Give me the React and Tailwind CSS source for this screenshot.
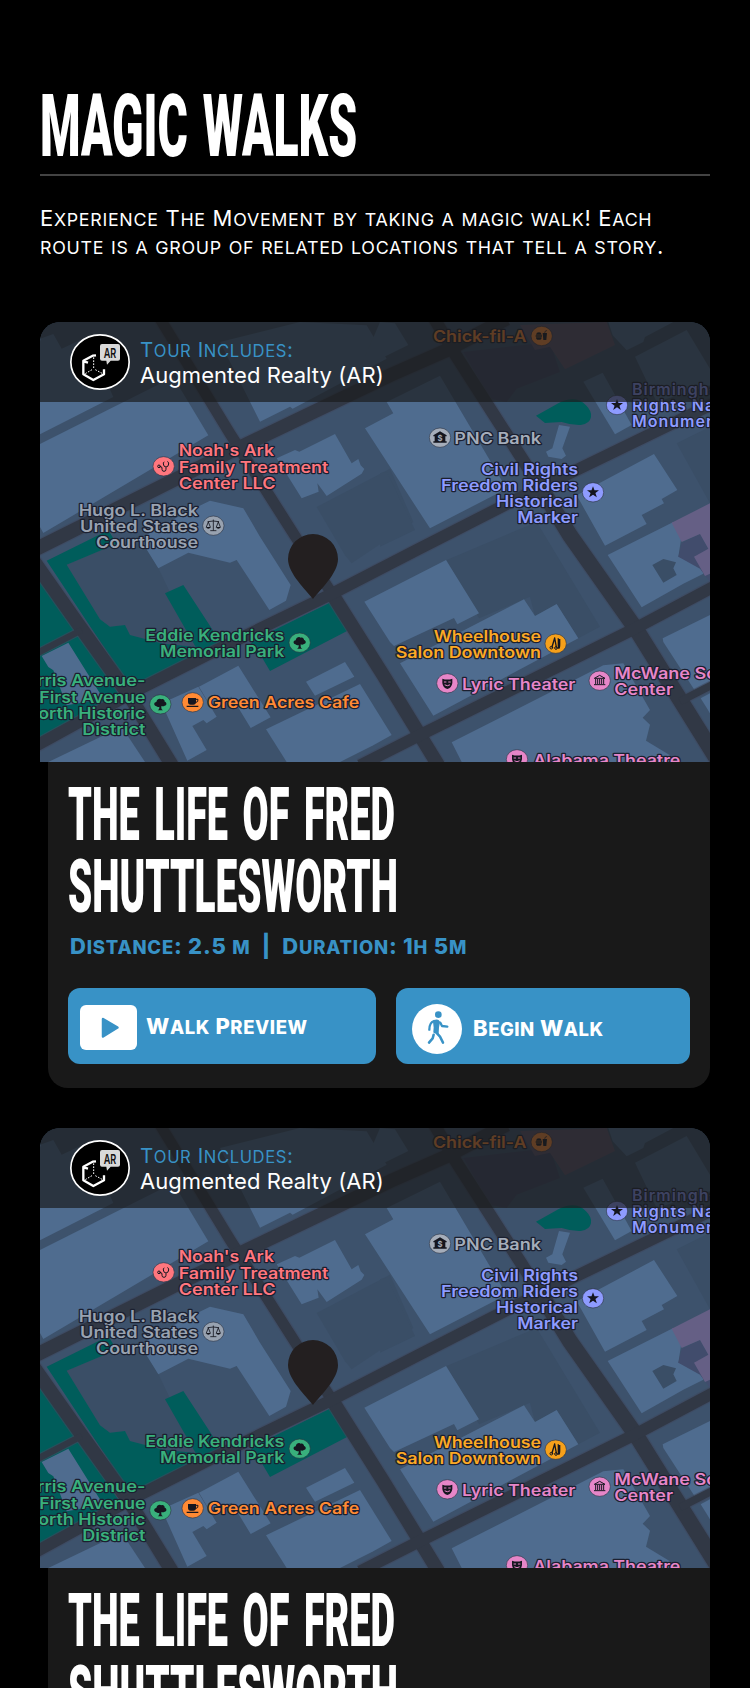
const GROUND = '#3d526c';
const B = '#4f6c8f';
const D = '#3a4e66';
const G = '#005d5b';

const shapes = [
  [D, '80,728 230,665 300,650 355,739 470,975 370,965 270,939 255,909 210,914 180,892'],
  [D, '830,555 1050,440 1120,600 935,724 915,700'],
  [D, '1020,454 1040,449 1125,624 1020,674'],
  [D, '1220,714 1490,600 1680,914 1615,949 1550,846 1485,882 1470,824 1317,889'],
  [D, '1910,364 2010,314 2010,544'],
  [B, '0,50 40,36 65,80 140,45 220,225 0,337'],
  [B, '0,366 400,165 505,340 10,633 0,615'],
  [B, '540,60 660,299 750,254 758,260 1040,110 980,10 780,0'],
  [B, '710,409 765,384 778,389 885,336 935,424 955,411 962,430 973,441 965,455 860,522 832,484 836,509 785,529'],
  [B, '1040,240 1060,274 975,319 1170,619 1400,500 1200,161'],
  [B, '300,650 430,575 510,536 610,559 660,644 752,789 738,836 688,864 590,714 570,722 445,692 355,739'],
  [B, '1080,1024 1452,832 1485,882 1550,846 1615,949 1180,1181'],
  [B, '973,839 1218,714 1317,874 1252,907 1242,888 1062,972 1050,960'],
  [B, '1610,520 1842,396 1912,504 1865,531 1872,544 1805,579 1820,606 1695,671'],
  [B, '1703,699 1900,600 1925,640 1915,704 1985,720 1990,755 1930,785 1805,856'],
  [D, '1837,729 1870,711 1908,721 1900,739 1910,759 1870,782'],
  [B, '1868,949 2010,879 2010,1085 1965,1106 1870,960'],
  [B, '1982,1129 2010,1114 2010,1174'],
  [B, '1785,104 1940,24 2010,140 2010,190 1850,240'],
  [B, '1630,179 1688,152 1775,309 1725,337'],
  [B, '1705,0 1718,40 1760,85 1810,60 1815,45 1900,0'],
  [B, '1020,0 1065,4 1105,69 960,140'],
  ['#3e4563', '1270,90 1530,60 1560,150 1430,200 1400,240 1350,230'],
  ['#5d5069', '1440,9 1700,0 1725,69 1575,142 1530,74 1485,84'],
  ['#414c6c', '1925,664 1980,636 2010,690 2010,780 1980,740 1915,704'],
  ['#655f85', '1895,602 2010,544 2010,755 1995,762 1962,704 2005,680 1980,636 1925,660'],
  [B, '1557,309 1590,314 1567,379 1578,401 1565,411 1525,404 1518,389 1537,379'],
  [G, '0,739 115,921 0,981'],
  [G, '0,994 125,934 235,1114 0,1249'],
  [G, '20,716 205,625 230,665 80,728 180,892 210,914 255,909 270,939 370,965 467,975 375,814 430,789 545,965 590,952 280,1109'],
  [G, '875,839 927,924 690,1047 665,1005 620,985 640,955'],
  [B, '5,1002 85,962 190,1130 80,1150 40,1045 25,1035'],
  [B, '365,1144 475,1094 530,1184 500,1204 490,1194 457,1212 500,1284 442,1316'],
  [B, '477,1094 595,1031 692,1186 632,1218 575,1124 510,1150'],
  [B, '798,1079 915,1020 943,1064 825,1121'],
  [B, '678,1222 960,1086 1055,1239 1000,1270 900,1320 740,1320'],
  [B, '25,1320 245,1214 315,1320'],
  [B, '1235,1261 1690,1030 1750,1024 1830,1164 1808,1187 1830,1208 1818,1256 1890,1300 1890,1320 1265,1320'],
];

const roads = [
  [36, '360,-10 570,335 770,650 880,822'],
  [44, '880,822 1030,1060 1195,1330'],
  [40, '1180,-15 1250,104 1500,494'],
  [50, '1500,494 1590,640 1790,924 2030,1310'],
  [44, '-20,715 120,914 270,1124 396,1330'],
  [44, '-20,685 570,390 1050,160 1220,85 1400,-10'],
  [38, '-20,1276 300,1100 590,954 870,818 1130,684 1420,536 2030,240'],
  [38, '960,1330 1140,1239 1780,922 2030,789'],
  [26, '1920,1138 2030,1082'],
  [22, '-10,994 125,924'],
];

const labels = [
  { x: 1179, y: 59, lines: ['Chick-fil-A'], w: [280], c: '#ff8a34', icon: 'food', ix: 1505, iy: 42 },
  { x: 1776, y: 219, ls: 3, lines: ['Birmingham Civil', 'Rights National', 'Monument'], c: '#8e9bff', icon: 'star', ix: 1731, iy: 249 },
  { x: 1243, y: 365, lines: ['PNC Bank'], w: [260], c: '#a5adba', icon: 'bank', ix: 1200, iy: 347 },
  { x: 1614, y: 458, end: true, lines: ['Civil Rights', 'Freedom Riders', 'Historical', 'Marker'], w: [291, 411, 246, 182], c: '#8e9bff', icon: 'star', ix: 1659, iy: 511 },
  { x: 416, y: 403, lines: ["Noah's Ark", 'Family Treatment', 'Center LLC'], w: [286, 449, 291], c: '#ff767e', icon: 'steth', ix: 371, iy: 433 },
  { x: 474, y: 581, end: true, lines: ['Hugo L. Black', 'United States', 'Courthouse'], w: [358, 354, 306], c: '#98a2b0', icon: 'scale', ix: 520, iy: 611 },
  { x: 733, y: 957, end: true, lines: ['Eddie Kendricks', 'Memorial Park'], w: [417, 373], c: '#39b07c', icon: 'tree', ix: 779, iy: 962 },
  { x: 316, y: 1093, end: true, lines: ['Morris Avenue-', 'First Avenue', 'North Historic', 'District'], w: [408, 318, 362, 189], c: '#39b07c', icon: 'tree', ix: 361, iy: 1147 },
  { x: 503, y: 1159, lines: ['Green Acres Cafe'], w: [455], c: '#ff8a34', icon: 'cup', ix: 458, iy: 1141 },
  { x: 1503, y: 959, end: true, lines: ['Wheelhouse', 'Salon Downtown'], w: [322, 436], c: '#fba925', icon: 'salon', ix: 1547, iy: 965, bg: '#f6a01a' },
  { x: 1266, y: 1103, lines: ['Lyric Theater'], w: [340], c: '#e686c8', icon: 'mask', ix: 1222, iy: 1084 },
  { x: 1723, y: 1071, lines: ['McWane Science', 'Center'], w: [450, 176], c: '#e686c8', icon: 'museum', ix: 1679, iy: 1076 },
  { x: 1480, y: 1331, lines: ['Alabama Theatre'], w: [441], c: '#e686c8', icon: 'mask', ix: 1431, iy: 1312 },
];

const K = '#15161f';

function Glyph({ name, bg }) {
  const line = { fill: 'none', stroke: K, strokeWidth: 3, strokeLinecap: 'round', strokeLinejoin: 'round' };
  switch (name) {
    case 'star':
      return <path fill={K} d="M0-18 4.500-6H18L7.300 2 11.500 15 0 7-11.500 15-7.300 2-18-6H-4.500Z" />;
    case 'tree':
      return (
        <path fill={K} d="M-13 5C-21 3-19-7-12-7-10-16-2-19 3-15 9-18 14-11 13-8 21-6 19 4 13 4 9 7 5 6 3 5L3 12Q4 16 8 18H-8Q-4 16-3 12L-3 7Q-8 9-13 5Z" />
      );
    case 'cup':
      return (
        <g>
          <path fill={K} d="M-14-13H10V-2Q10 7 2 7H-6Q-14 7-14-2ZM-18 10H17V14H-18Z" />
          <path {...line} d="M10-9H16Q18-1 9 1" />
        </g>
      );
    case 'food':
      return (
        <g fill={K}>
          <path d="M-17-4Q-16-11-8-11-1-11 0-4ZM-18-2H1V2H-18ZM-17 4H0Q0 11-4 11H-13Q-17 11-17 4ZM3-9H16L14 12H5Z" />
          <path {...line} strokeWidth="2" d="M9-9 11-15 15-16" />
        </g>
      );
    case 'bank':
      return (
        <g>
          <path fill={K} d="M-20-7 0-19 20-7V-4H16V11H20V15H-20V11H-16V-4H-20Z" />
          <text x="0" y="9" textAnchor="middle" fontSize="23" fontWeight="700" fill={bg}>$</text>
        </g>
      );
    case 'steth':
      return (
        <g>
          <circle cx="-14" cy="0" r="4" {...line} />
          <path {...line} d="M-10 1Q-5 0-5 5V9Q-5 15 1 15 7 15 7 9V4M1-13Q-2-13-1-7 0 2 7 2 14 2 15-7 16-13 12-14" />
        </g>
      );
    case 'scale':
      return (
        <g>
          <path {...line} strokeWidth="2.500" d="M0-17V14M-8 15H8M-16-12 0-14 16-12M-15-11-21 4M-15-11-9 4M15-11 9 4M15-11 21 4" />
          <path fill={K} d="M-22 4H-8Q-10 9-15 9-20 9-22 4ZM8 4H22Q20 9 15 9 10 9 8 4Z" />
        </g>
      );
    case 'salon':
      return (
        <g>
          <path {...line} strokeWidth="4" d="M-3-17-11 10M-3-17 2 10" />
          <circle cx="-13" cy="12" r="4" {...line} />
          <circle cx="1" cy="13" r="4" {...line} />
          <path fill={K} d="M6-17H9V-14H14V2Q14 16 10 16 6 16 6 6Z" />
        </g>
      );
    case 'mask':
      return (
        <g>
          <path fill={K} d="M-15-14Q0-9 15-14V-1Q13 14 0 17-13 14-15-1Z" />
          <path fill="none" stroke={bg} strokeWidth="3" strokeLinecap="round" d="M-9-4H-4M4-4H9M-7 5Q0 10 7 5" />
        </g>
      );
    default:
      return (
        <g>
          <path fill="none" stroke={K} strokeWidth="3" strokeLinejoin="round" d="M-16-7 0-16 16-7Z" />
          <path fill="none" stroke={K} strokeWidth="3" d="M-12-5V10M-6-5V10M0-5V10M6-5V10M12-5V10M-17 12H17" />
        </g>
      );
  }
}

function MapView() {
  return (
    <svg viewBox="0 0 2010 1320" className="block h-full w-full" fontFamily="Inter, 'Liberation Sans', sans-serif">
      <rect width="2010" height="1320" fill={GROUND} />
      {shapes.map(([fill, pts], i) => (
        <polygon key={i} points={pts} fill={fill} />
      ))}
      <path fill={G} d="M1488 281 1555 244Q1575 232 1600 232 1622 232 1638 250 1656 268 1653 285 1650 305 1622 309 1595 310 1565 300 1535 302 1515 303 1504 299Z" />
      {roads.map(([w, pts], i) => (
        <polyline key={i} points={pts} fill="none" stroke="#3f485e" strokeWidth={w + 4} strokeOpacity="0.6" />
      ))}
      {roads.map(([w, pts], i) => (
        <polyline key={i} points={pts} fill="none" stroke="#313845" strokeWidth={w - 3} />
      ))}
      {labels.map((l) => (
        <g key={l.lines[0]}>
          <g transform={`translate(${l.ix} ${l.iy})`}>
            <ellipse rx="32" ry="29" fill={l.bg || l.c} stroke="#2a3040" strokeOpacity="0.7" strokeWidth="2.500" />
            <Glyph name={l.icon} bg={l.c} />
          </g>
          {l.lines.map((t, i) => (
            <text
              key={t}
              x={l.x}
              y={l.y + i * 48.5}
              textAnchor={l.end ? 'end' : 'start'}
              textLength={l.w ? l.w[i] : undefined}
              lengthAdjust="spacingAndGlyphs"
              letterSpacing={l.ls || 0}
              fontSize="48"
              fontWeight="600"
              fill={l.c}
              stroke="#1b2030"
              strokeWidth="7"
              strokeLinejoin="round"
              paintOrder="stroke"
            >
              {t}
            </text>
          ))}
        </g>
      ))}
      <path fill="#231f20" d="M819 831C800 806 744 755 744 711A75 75 0 0 1 894 711C894 755 838 806 819 831Z" />
    </svg>
  );
}

function SmallCaps({ children, className = '', bold = false }) {
  const small = bold ? 'text-[0.84em] leading-none' : 'text-[0.81em] leading-none';
  return (
    <span className={`uppercase ${className}`}>
      {children.split(/([a-z]+)/).map((part, i) =>
        i % 2 ? <span key={i} className={small}>{part}</span> : part
      )}
    </span>
  );
}

function ArBadge() {
  return (
    <svg viewBox="0 0 180 168" className="h-14 w-[60px] shrink-0">
      <ellipse cx="90" cy="84" rx="87.500" ry="81.500" fill="#000" stroke="#fff" strokeWidth="5" />
      <path fill="#d9d9d9" d="M96 30H144Q150 30 150 36V74Q150 80 144 80H122L111 92 109 80H96Q90 80 90 74V36Q90 30 96 30Z" />
      <text x="120" y="71" textAnchor="middle" textLength="38" lengthAdjust="spacingAndGlyphs" fontFamily="Inter, sans-serif" fontWeight="600" fontSize="39" fill="#111">AR</text>
      <path fill="none" stroke="#fff" strokeWidth="7" strokeLinejoin="round" d="M78 64 68 65 40 80V121L70 138 102 121V106M40 82 54 86" />
      <path fill="none" stroke="#fff" strokeWidth="3" strokeDasharray="5 4" d="M71 70V104M66 107 44 120M76 107 98 119" />
    </svg>
  );
}

function WalkCard() {
  return (
    <article className="w-[670px]">
      <div className="relative h-[440px] overflow-hidden rounded-t-[20px]">
        <MapView />
        <div className="absolute inset-x-0 top-0 flex h-20 items-center gap-[10px] bg-[rgba(27,28,30,0.7)] pl-[30px]">
          <ArBadge />
          <div className="flex flex-col whitespace-nowrap text-[22px] text-white">
            <SmallCaps className="text-[20.5px] leading-[26px] tracking-[0.6px] text-[#3892c6]">Tour Includes:</SmallCaps>
            <span className="pb-px leading-[24px] tracking-[0.05px]">Augmented Realty (AR)</span>
          </div>
        </div>
      </div>
      <div className="ml-2 h-[326px] rounded-b-[20px] bg-[#191919] px-5 pt-4">
        <h2 className="whitespace-nowrap font-[Roboto] text-[75px] font-black uppercase leading-[72px] text-white">
          <span className="block w-[580px] origin-left scale-x-[0.505] [word-spacing:10px]">The Life of Fred</span>
          <span className="block w-[580px] origin-left scale-x-[0.517]">Shuttlesworth</span>
        </h2>
        <p className="mt-[8px] h-8 whitespace-pre pl-[2px] text-[22px] font-extrabold leading-8 tracking-[0.8px] text-[#3892c6]">
          <SmallCaps bold>{'Distance: 2.5 m  |  Duration: 1h 5m'}</SmallCaps>
        </p>
        <div className="mt-[26px] flex gap-5">
          <button className="flex h-[76px] w-[308px] items-center gap-[9px] rounded-xl bg-[#3892c6] pl-3 text-[22px] font-extrabold tracking-[0.6px] text-white">
            <svg viewBox="0 0 57 45" className="mt-0.5 h-[45px] w-[57px]">
              <rect width="57" height="45" rx="6" fill="#fff" />
              <path d="M23 14 37.500 22.500 23 31.500Z" fill="#3892c6" stroke="#3892c6" strokeWidth="2.500" strokeLinejoin="round" />
            </svg>
            <SmallCaps bold>Walk Preview</SmallCaps>
          </button>
          <button className="flex h-[76px] w-[294px] items-center gap-[11px] rounded-xl bg-[#3892c6] pl-4 pt-1 text-[22px] font-extrabold tracking-[0.5px] text-white">
            <svg viewBox="0 0 150 150" className="mt-0.5 h-[50px] w-[50px]">
              <circle cx="75" cy="75" r="75" fill="#fff" />
              <g fill="none" stroke="#3892c6" strokeLinecap="round" strokeLinejoin="round">
                <circle cx="79" cy="32" r="10" fill="#3892c6" stroke="none" />
                <path strokeWidth="7" d="M66 51Q52 56 52 77M85 56 90 66 106 68" />
                <path strokeWidth="7.500" d="M65 92 62 103 51 116M75 88 84 98 93 116" />
                <path fill="#3892c6" strokeWidth="6" d="M66 53Q76 46 81 54L78 70 77 88 67 84 68 70Z" />
              </g>
            </svg>
            <SmallCaps bold>Begin Walk</SmallCaps>
          </button>
        </div>
      </div>
    </article>
  );
}

export default function App() {
  return (
    <main className="h-[1688px] w-[750px] overflow-hidden bg-black px-10 pt-[77px] font-[Inter,'Liberation_Sans',sans-serif] text-white">
      <header className="h-[245px]">
        <h1 className="h-[99px] w-[650px]">
          <span className="block origin-left scale-x-[0.532] whitespace-nowrap font-[Roboto] text-[87px] font-black uppercase leading-[98px] [word-spacing:6px]">Magic Walks</span>
        </h1>
        <hr className="-mt-[2px] border-t-2 border-[#434343]" />
        <p className="mt-[28px] whitespace-nowrap text-[22px] leading-[28px] tracking-[0.7px]">
          <SmallCaps>Experience The Movement by taking a magic walk! Each</SmallCaps>
          <br />
          <SmallCaps>route is a group of related locations that tell a story.</SmallCaps>
        </p>
      </header>
      <div className="flex flex-col gap-10">
        <WalkCard />
        <WalkCard />
      </div>
    </main>
  );
}
